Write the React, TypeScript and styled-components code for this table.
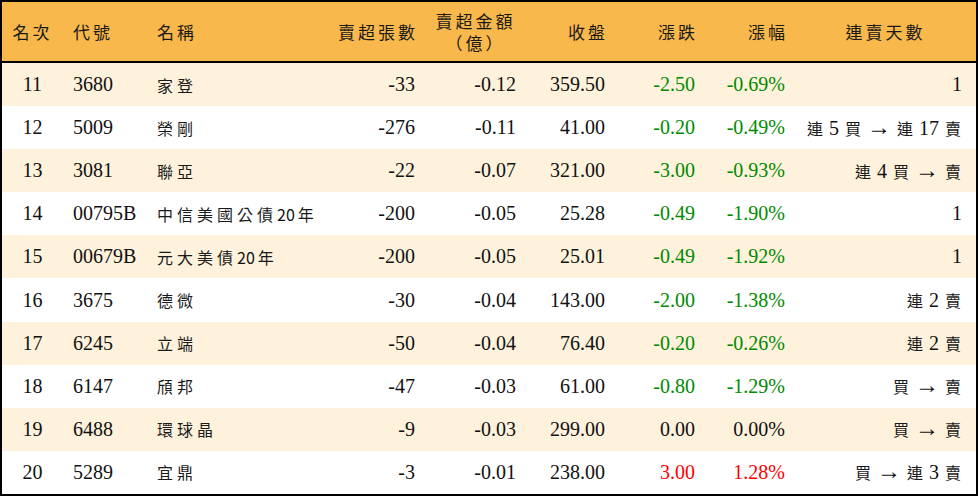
import React from 'react';
import styled, { createGlobalStyle, css } from 'styled-components';

type Row = {
  rank: number;
  code: string;
  name: string;
  lots: string;
  amount: string;
  close: string;
  change: string;
  pct: string;
  streak: string;
};

const rows: Row[] = [
  { rank: 11, code: '3680', name: '家登', lots: '-33', amount: '-0.12', close: '359.50', change: '-2.50', pct: '-0.69%', streak: '1' },
  { rank: 12, code: '5009', name: '榮剛', lots: '-276', amount: '-0.11', close: '41.00', change: '-0.20', pct: '-0.49%', streak: '連 5 買 → 連 17 賣' },
  { rank: 13, code: '3081', name: '聯亞', lots: '-22', amount: '-0.07', close: '321.00', change: '-3.00', pct: '-0.93%', streak: '連 4 買 → 賣' },
  { rank: 14, code: '00795B', name: '中信美國公債20年', lots: '-200', amount: '-0.05', close: '25.28', change: '-0.49', pct: '-1.90%', streak: '1' },
  { rank: 15, code: '00679B', name: '元大美債20年', lots: '-200', amount: '-0.05', close: '25.01', change: '-0.49', pct: '-1.92%', streak: '1' },
  { rank: 16, code: '3675', name: '德微', lots: '-30', amount: '-0.04', close: '143.00', change: '-2.00', pct: '-1.38%', streak: '連 2 賣' },
  { rank: 17, code: '6245', name: '立端', lots: '-50', amount: '-0.04', close: '76.40', change: '-0.20', pct: '-0.26%', streak: '連 2 賣' },
  { rank: 18, code: '6147', name: '頎邦', lots: '-47', amount: '-0.03', close: '61.00', change: '-0.80', pct: '-1.29%', streak: '買 → 賣' },
  { rank: 19, code: '6488', name: '環球晶', lots: '-9', amount: '-0.03', close: '299.00', change: '0.00', pct: '0.00%', streak: '買 → 賣' },
  { rank: 20, code: '5289', name: '宜鼎', lots: '-3', amount: '-0.01', close: '238.00', change: '3.00', pct: '1.28%', streak: '買 → 連 3 賣' },
];

const GlobalStyle = createGlobalStyle`
  html, body {
    margin: 0;
    padding: 0;
    background: #fff;
  }
  * {
    box-sizing: border-box;
  }
`;

const COLUMNS = '61px 86px 181px 95px 101px 89px 90px 90px 181px';

type Align = 'left' | 'center' | 'right';
type Tone = 'plain' | 'down' | 'up';

const Sheet = styled.div`
  width: 978px;
  height: 496px;
  border: 2px solid #000;
  display: flex;
  flex-direction: column;
  font-family: 'Liberation Serif', 'Noto Sans CJK TC', serif;
  color: #111;
`;

const HeaderRow = styled.div`
  display: grid;
  grid-template-columns: ${COLUMNS};
  height: 61px;
  flex: none;
  background: #f9b84b;
  border-bottom: 2px solid #000;
`;

const BodyRow = styled.div<{ $shade: boolean }>`
  display: grid;
  grid-template-columns: ${COLUMNS};
  flex: 1;
  background: ${p => (p.$shade ? '#fef2dc' : '#ffffff')};
`;

const flexAlign = (a: Align) =>
  a === 'left' ? 'flex-start' : a === 'right' ? 'flex-end' : 'center';

const HeadCell = styled.div<{ $align: Align; $pad?: number }>`
  display: flex;
  flex-direction: column;
  align-items: ${p => flexAlign(p.$align)};
  justify-content: center;
  padding: 0 ${p => p.$pad ?? 10}px;
  font-family: 'Noto Sans CJK TC', serif;
  font-size: 17px;
  letter-spacing: 3px;
  line-height: 22px;
  white-space: nowrap;
  color: #1a1a1a;
  ${p =>
    p.$align === 'right' &&
    css`
      margin-right: -3px;
    `}
`;

const Cell = styled.div<{ $align: Align; $tone?: Tone; $pad?: number }>`
  display: flex;
  align-items: center;
  justify-content: ${p => flexAlign(p.$align)};
  padding: 0 ${p => p.$pad ?? 10}px;
  font-size: 20px;
  white-space: nowrap;
  color: ${p => (p.$tone === 'down' ? '#008a00' : p.$tone === 'up' ? '#ff0000' : '#111')};
`;

const Han = styled.span<{ $spaced?: boolean }>`
  font-family: 'Noto Sans CJK TC', sans-serif;
  font-size: 16px;
  letter-spacing: ${p => (p.$spaced ? '4px' : '0')};
  margin: ${p => (p.$spaced ? '0' : '0 1px')};
  color: #1a1a1a;
`;

const NameDigits = styled.span`
  font-family: 'Noto Sans CJK TC', sans-serif;
  font-size: 16px;
  margin-right: 3px;
`;

const Arrow = styled.span`
  font-size: 24px;
  line-height: 0;
`;

const HAN = /([\u4e00-\u9fff]+)/;

const Streak = ({ text }: { text: string }) => (
  <span>
    {text.split(/([\u4e00-\u9fff]+|→)/).map((part, i) =>
      part === '→' ? (
        <Arrow key={i}>→</Arrow>
      ) : HAN.test(part) ? (
        <Han key={i}>{part}</Han>
      ) : (
        <React.Fragment key={i}>{part}</React.Fragment>
      )
    )}
  </span>
);

const Name = ({ text }: { text: string }) => (
  <span>
    {text.split(HAN).map((part, i) =>
      HAN.test(part) ? (
        <Han key={i} $spaced>
          {part}
        </Han>
      ) : part ? (
        <NameDigits key={i}>{part}</NameDigits>
      ) : null
    )}
  </span>
);

const toneOf = (v: string): Tone => (v.startsWith('-') ? 'down' : parseFloat(v) > 0 ? 'up' : 'plain');

export default function App() {
  return (
    <>
      <GlobalStyle />
      <Sheet>
        <HeaderRow>
          <HeadCell $align="center" $pad={0}>名次</HeadCell>
          <HeadCell $align="left">代號</HeadCell>
          <HeadCell $align="left" $pad={8}>名稱</HeadCell>
          <HeadCell $align="right">賣超張數</HeadCell>
          <HeadCell $align="center" $pad={0}>
            <span>賣超金額</span>
            <span>（億）</span>
          </HeadCell>
          <HeadCell $align="right">收盤</HeadCell>
          <HeadCell $align="right">漲跌</HeadCell>
          <HeadCell $align="right">漲幅</HeadCell>
          <HeadCell $align="center" $pad={0}>連賣天數</HeadCell>
        </HeaderRow>
        {rows.map((r, i) => (
          <BodyRow key={r.rank} $shade={i % 2 === 0}>
            <Cell $align="center" $pad={0}>{r.rank}</Cell>
            <Cell $align="left">{r.code}</Cell>
            <Cell $align="left" $pad={8}>
              <Name text={r.name} />
            </Cell>
            <Cell $align="right">{r.lots}</Cell>
            <Cell $align="right">{r.amount}</Cell>
            <Cell $align="right">{r.close}</Cell>
            <Cell $align="right" $tone={toneOf(r.change)}>{r.change}</Cell>
            <Cell $align="right" $tone={toneOf(r.pct)}>{r.pct}</Cell>
            <Cell $align="right" $pad={14}>
              <Streak text={r.streak} />
            </Cell>
          </BodyRow>
        ))}
      </Sheet>
    </>
  );
}
